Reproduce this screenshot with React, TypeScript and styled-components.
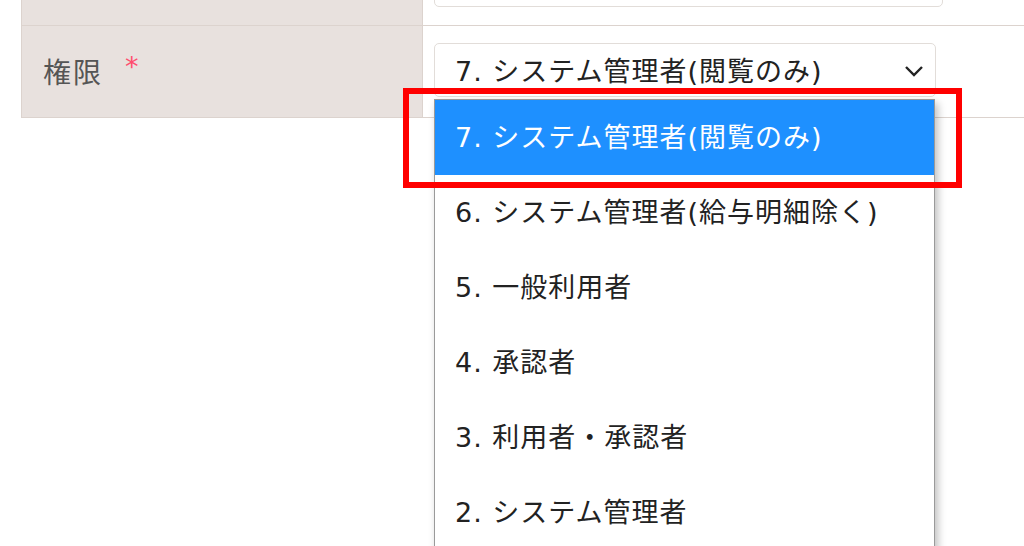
import React from 'react'
import styled, { createGlobalStyle } from 'styled-components'

const GlobalStyle = createGlobalStyle`
  html, body {
    margin: 0;
    padding: 0;
    background: #fff;
    overflow: hidden;
  }
  body {
    font-family: "DejaVu Sans", "Noto Sans CJK JP", sans-serif;
    color: #222;
  }
`

const Page = styled.div`
  width: 1024px;
  height: 546px;
  overflow: hidden;
`

const Table = styled.div`
  margin: -66px 0 0 21px;
  display: flex;
  flex-direction: column;
`

const Row = styled.div`
  display: flex;
  height: 92px;
  box-sizing: border-box;
  border-bottom: 1px solid #dcd3ce;
`

const LabelCell = styled.div`
  width: 402px;
  flex-shrink: 0;
  background: #e8e1de;
  border-right: 1px solid #dcd3ce;
  border-left: 1px solid #dcd3ce;
  display: flex;
  align-items: center;
  padding: 0 0 2px 21px;
  box-sizing: border-box;
  font-family: "Noto Sans CJK JP", sans-serif;
  font-size: 28px;
  letter-spacing: 2px;
  color: #555;
`

const Required = styled.span`
  color: #ff4d6e;
  font-family: "DejaVu Sans", sans-serif;
  font-size: 27px;
  margin-left: 22px;
  margin-top: -8px;
`

const ValueCell = styled.div`
  flex: 1;
  display: flex;
  align-items: flex-start;
  padding: ${(p) => p.top}px 0 0 11px;
`

const TextBox = styled.div`
  width: ${(p) => p.w}px;
  height: 54px;
  box-sizing: border-box;
  border: 1px solid #e2ddd9;
  border-radius: 5px;
  background: #fff;
`

const SelectWrap = styled.div`
  position: relative;
`

const SelectBox = styled(TextBox)`
  display: flex;
  align-items: center;
  justify-content: space-between;
  padding: 0 10px 2px 20px;
  font-size: 27px;
  letter-spacing: 1px;
`

const Chevron = styled.svg`
  width: 22px;
  height: 22px;
  margin-top: 4px;
`

const Dropdown = styled.ul`
  position: absolute;
  top: 56px;
  left: 0;
  width: 501px;
  margin: 0;
  padding: 0;
  list-style: none;
  background: #fff;
  border: 1px solid #9a9a9a;
  box-sizing: border-box;
  box-shadow: 3px 4px 8px rgba(0, 0, 0, 0.25);
  z-index: 2;
`

const Option = styled.li`
  height: 75px;
  display: flex;
  align-items: center;
  padding: 0 0 4px 20px;
  box-sizing: border-box;
  font-size: 27px;
  letter-spacing: 1px;
  color: ${(p) => (p.active ? '#fff' : '#222')};
  background: ${(p) => (p.active ? '#1e90ff' : '#fff')};
`

const Highlight = styled.div`
  position: absolute;
  left: -31px;
  top: 45px;
  width: 559px;
  height: 100px;
  box-sizing: border-box;
  border: 6px solid #ff0000;
  z-index: 3;
  pointer-events: none;
`

const options = [
  '7. システム管理者(閲覧のみ)',
  '6. システム管理者(給与明細除く)',
  '5. 一般利用者',
  '4. 承認者',
  '3. 利用者・承認者',
  '2. システム管理者',
]

const App = () => {
  return (
    <Page>
      <GlobalStyle />
      <Table>
        <Row>
          <LabelCell />
          <ValueCell top={19}>
            <TextBox w={509} />
          </ValueCell>
        </Row>
        <Row>
          <LabelCell>
            権限<Required>*</Required>
          </LabelCell>
          <ValueCell top={17}>
            <SelectWrap>
              <SelectBox w={502}>
                <span>{options[0]}</span>
                <Chevron viewBox="0 0 22 22">
                  <polyline points="3,7 11,15 19,7" fill="none" stroke="#222" strokeWidth="2.4" />
                </Chevron>
              </SelectBox>
              <Dropdown>
                {options.map((o, i) => (
                  <Option key={o} active={i === 0}>{o}</Option>
                ))}
              </Dropdown>
              <Highlight />
            </SelectWrap>
          </ValueCell>
        </Row>
      </Table>
    </Page>
  )
}

export default App
